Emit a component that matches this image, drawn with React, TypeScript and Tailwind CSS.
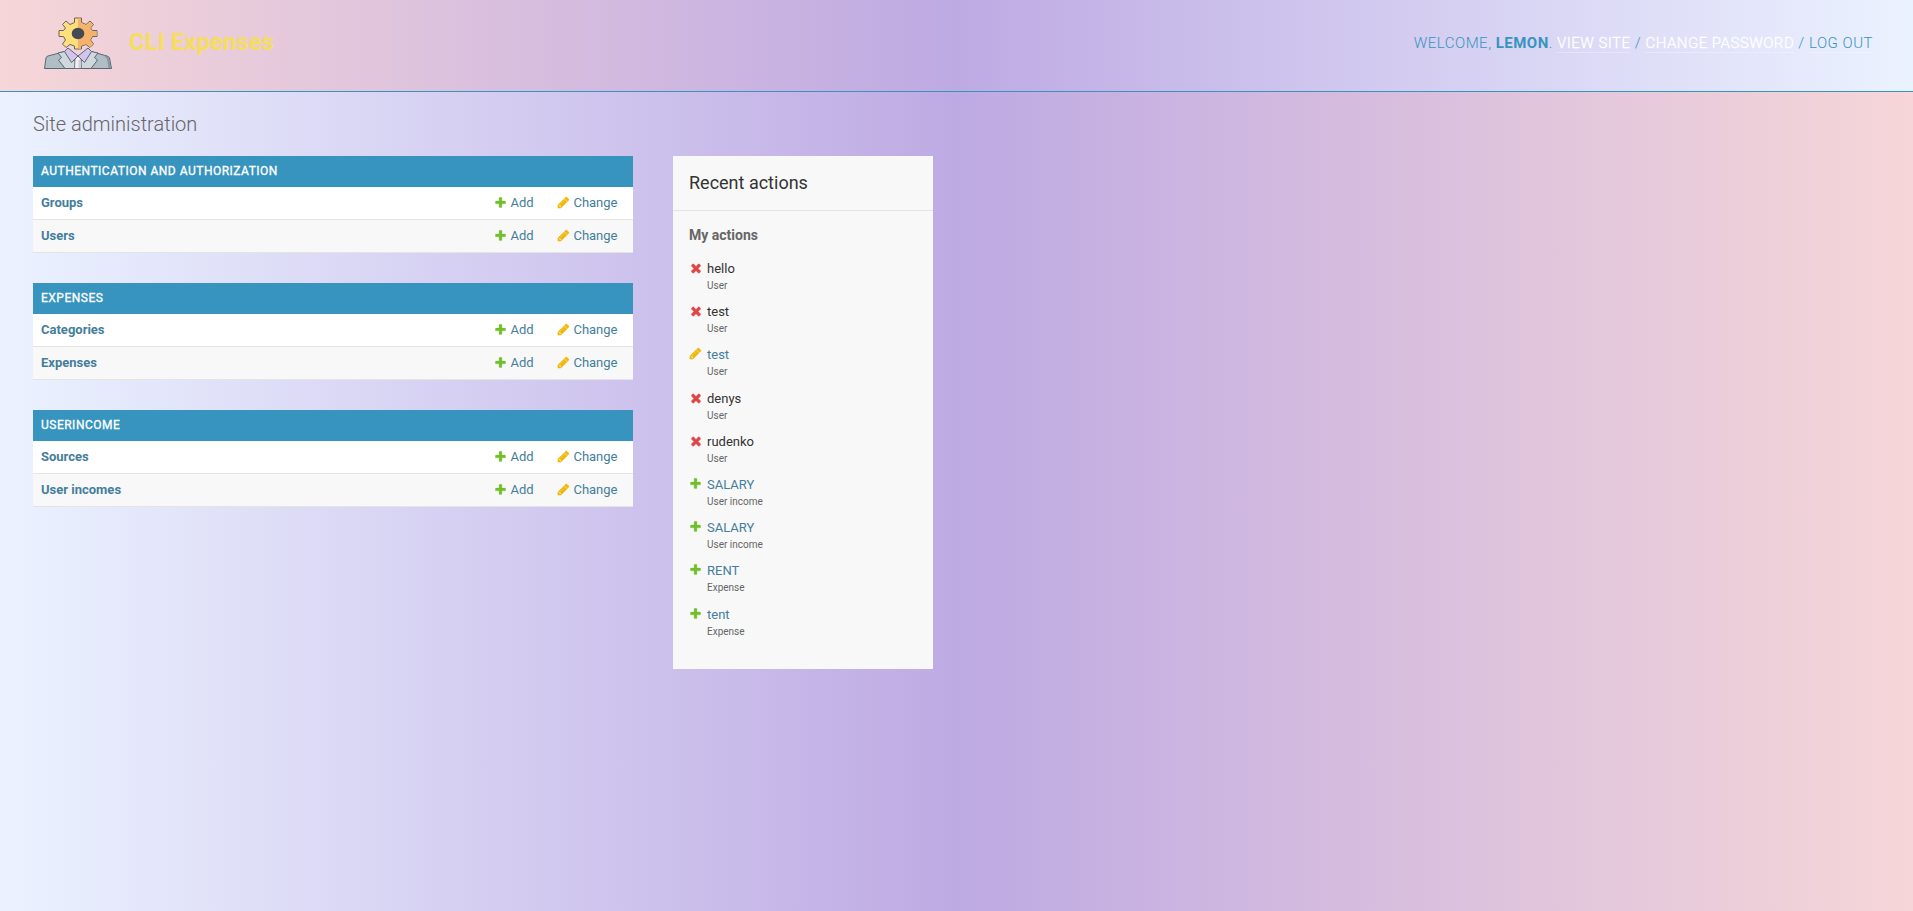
import React from "react";

type Kind = "add" | "change" | "delete";

function ActionIcon({ kind }: { kind: Kind }) {
  const size = kind === "delete" ? 14 : 13;
  return (
    <svg width={size} height={size} viewBox="0 0 1792 1792" className="block shrink-0">
      {kind === "add" && (
        <path
          fill="#70bf2b"
          stroke="#70bf2b"
          strokeWidth="40"
          d="M1600 796v192q0 40-28 68t-68 28h-416v416q0 40-28 68t-68 28h-192q-40 0-68-28t-28-68v-416h-416q-40 0-68-28t-28-68v-192q0-40 28-68t68-28h416v-416q0-40 28-68t68-28h192q40 0 68 28t28 68v416h416q40 0 68 28t28 68z"
        />
      )}
      {kind === "change" && (
        <path
          fill="#efb80b"
          stroke="#efb80b"
          strokeWidth="70"
          d="M491 1536l91-91-235-235-91 91v107h128v128h107zm523-928q0-22-22-22-10 0-17 7l-542 542q-7 7-7 17 0 22 22 22 10 0 17-7l542-542q7-7 7-17zm-54-192l416 416-832 832h-416v-416zm683 96q0 53-37 90l-166 166-416-416 166-165q36-38 90-38 53 0 91 38l235 234q37 39 37 91z"
        />
      )}
      {kind === "delete" && (
        <path
          fill="#dd4646"
          stroke="#dd4646"
          strokeWidth="50"
          d="M1490 1322q0 40-28 68l-136 136q-28 28-68 28t-68-28l-294-294-294 294q-28 28-68 28t-68-28l-136-136q-28-28-28-68t28-68l294-294-294-294q-28-28-28-68t28-68l136-136q28-28 68-28t68 28l294 294 294-294q28-28 68-28t68 28l136 136q28 28 28 68t-28 68l-294 294 294 294q28 28 28 68z"
        />
      )}
    </svg>
  );
}

const modules = [
  { title: "Authentication and Authorization", rows: ["Groups", "Users"] },
  { title: "Expenses", rows: ["Categories", "Expenses"] },
  { title: "Userincome", rows: ["Sources", "User incomes"] },
];

const actions: { kind: Kind; name: string; type: string }[] = [
  { kind: "delete", name: "hello", type: "User" },
  { kind: "delete", name: "test", type: "User" },
  { kind: "change", name: "test", type: "User" },
  { kind: "delete", name: "denys", type: "User" },
  { kind: "delete", name: "rudenko", type: "User" },
  { kind: "add", name: "SALARY", type: "User income" },
  { kind: "add", name: "SALARY", type: "User income" },
  { kind: "add", name: "RENT", type: "Expense" },
  { kind: "add", name: "tent", type: "Expense" },
];

function Logo() {
  return (
    <svg width="70" height="54" viewBox="0 0 70 54" className="block" strokeLinejoin="round">
      <path d="M1.500 51.500 L3 41 Q3.300 39.500 5 39 L22 34.500 L35 44 L48 34.500 L64 39 Q66 39.500 66.500 41 L68.500 51.500 Z" fill="#afbec4" stroke="#5d6670" strokeWidth="1" />
      <path d="M61 38.500 Q65 39.500 66 42 L67.800 51 H65.500 L64 42 Z" fill="#84969e" />
      <path d="M21.500 34.500 L15 36 L18.500 40.500 L15.500 43 L22 51.500 H48 L54.500 43 L51.500 40.500 L55 36 L48.500 34.500 L35 47 Z" fill="#cfd8dd" stroke="#5d6670" strokeWidth="1" />
      <path d="M31.500 51.500 L32 42 L35 39 L38 42 L38.500 51.500 Z" fill="#f1f0f0" stroke="#5d6670" strokeWidth="0.800" />
      <path d="M35.500 43 H37.500 L38 51 H35.500 Z" fill="#d0ccd0" />
      <path d="M25 31 L35 39 L28.500 45.500 L21.500 34.500 Z M45 31 L35 39 L41.500 45.500 L48.500 34.500 Z" fill="#d2c4ec" stroke="#5d6670" strokeWidth="1" />
      <path d="M31.500 1 H38.500 V5.500 L43 7.500 L47 4 L50.500 7.500 L47.500 11 L49.500 13.500 H54 V19.500 H49.500 L47.500 23 L50.500 27 L47 30.500 L43 27.500 L38.500 29 V32 H31.500 V29 L27 27.500 L23 30.500 L19.500 27 L22.500 23 L20.500 19.500 H16 V13.500 H20.500 L22.500 11 L19.500 7.500 L23 4 L27 7.500 L31.500 5.500 Z" fill="#ffdf7c" stroke="#6b6459" strokeWidth="1" />
      <path d="M35 1.500 H38 V6 L43 8.200 L47 4.700 L49.800 7.500 L47 11 L49 14 H53.500 V19 H49 L47 23 L49.800 27 L47 29.800 L43 27 L38 28.600 V31.500 H35 Z" fill="#f6b26b" />
      <ellipse cx="35" cy="16.500" rx="6.300" ry="5.700" fill="#434a54" />
    </svg>
  );
}

export default function App() {
  return (
    <div className="flex h-[911px] flex-col overflow-hidden bg-[linear-gradient(90deg,#ebf2ff_0%,#beaae3_50%,#f6d6d8_100%)] font-['Roboto',sans-serif] text-[13px] text-[#333]">
      <header className="flex h-[92px] shrink-0 items-start justify-between border-b border-[#3794bf] bg-[linear-gradient(90deg,#f6d6d8_0%,#beaae3_50%,#ebf2ff_100%)] pl-[43px] pr-10">
        <div className="flex">
          <div className="pt-[17px]"><Logo /></div>
          <h1 className="ml-4 mt-[27px] text-2xl leading-[30px] font-bold text-[#f5dd5d]">CLI Expenses</h1>
        </div>
        <div className="mt-[32px] flex text-[15px] leading-[23px] font-light tracking-[0.5px] whitespace-pre text-[#3794bf] uppercase">
          Welcome, <strong className="font-bold">Lemon</strong>.{" "}
          <a className="h-[21px] border-b border-white/30 text-white [-webkit-text-stroke:0.3px_white]">View site</a> / <a className="h-[21px] border-b border-white/30 text-white [-webkit-text-stroke:0.3px_white]">Change password</a> / <a className="h-[21px] border-b border-white/30">Log out</a>
        </div>
      </header>
      <main className="px-[33px] pt-5">
        <h2 className="h-[44px] text-xl leading-[24px] font-light text-[#666]">Site administration</h2>
        <div className="flex items-start gap-10">
          <div className="flex w-[600px] flex-col gap-[30px]">
            {modules.map((m) => (
              <section key={m.title}>
                <h3 className="h-[31px] bg-[#3794bf] px-2 text-xs leading-[30px] font-normal tracking-[0.5px] text-white uppercase [-webkit-text-stroke:0.3px_white]">{m.title}</h3>
                {m.rows.map((r, i) => (
                  <div key={r} className={`flex h-[33px] items-center border-b border-[#e4e4e4] pl-2 pr-[15.500px] leading-4 text-[#447e9b] ${i ? "bg-[#f8f8f8]" : "bg-white"}`}>
                    <b className="grow font-bold">{r}</b>
                    <a className="flex w-[63px] items-start gap-[3px]"><span className="pt-[0.500px]"><ActionIcon kind="add" /></span>Add</a>
                    <a className="flex items-start gap-[3px]"><span className="pt-[0.500px]"><ActionIcon kind="change" /></span>Change</a>
                  </div>
                ))}
              </section>
            ))}
          </div>
          <aside className="h-[513px] w-[260px] bg-[#f8f8f8]">
            <h2 className="h-[55px] border-b border-[#e4e4e4] px-4 text-lg leading-[54px] text-[#333]">Recent actions</h2>
            <h3 className="px-4 pt-4 text-sm leading-4 font-bold text-[#666]">My actions</h3>
            <ul className="px-4 pt-[17px]">
              {actions.map((a, i) => (
                <li key={i} className="flex h-[43.200px]">
                  <div className="w-[18px] pt-px"><ActionIcon kind={a.kind} /></div>
                  <div>
                    <div className={`leading-[18px] ${a.kind === "delete" ? "text-[#333]" : "text-[#447e9b]"}`}>{a.name}</div>
                    <div className="text-[10px] leading-[15px] text-[#666]">{a.type}</div>
                  </div>
                </li>
              ))}
            </ul>
          </aside>
        </div>
      </main>
    </div>
  );
}
